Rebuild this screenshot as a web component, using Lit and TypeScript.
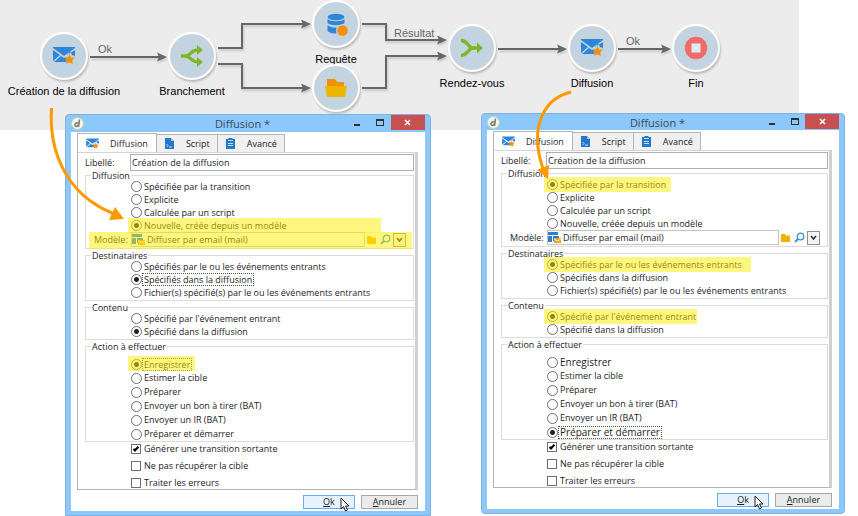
import { LitElement, html, svg, css, nothing } from "lit";
import { customElement, property } from "lit/decorators.js";
import { classMap } from "lit/directives/class-map.js";
import { styleMap } from "lit/directives/style-map.js";

interface Option {
  label: string;
  checked?: boolean;
  focus?: boolean;
  large?: boolean;
  /** Width of the marker highlight, in pixels. */
  mark?: number;
}

interface Group {
  legend: string;
  options: Option[];
  template?: boolean;
  roomy?: boolean;
}

interface DialogData {
  id: string;
  templateMarked: boolean;
  groups: Group[];
}

interface Node {
  x: number;
  y: number;
  label: string;
  icon: string;
}

const mailIcon = svg`
  <path fill="#2e86d8" d="M0 1h22v1L11 10 0 2zM0 4l7 5-7 6zM22 4v6l-3-1-2-4-2 4-1 0zM1 16l7-6 3 2 2-1 1 2-1 3z"/>
  <path fill="#f29100" d="M16.500 8l1.600 3.400 3.700.4-2.700 2.600.7 3.800-3.300-1.900-3.300 1.900.7-3.800-2.700-2.600 3.700-.4z"/>`;

const nodeIcons: Record<string, unknown> = {
  mail: mailIcon,
  fork: svg`
    <path fill="none" stroke="#7fb52b" stroke-width="3.400" d="M0 10h5c4 0 5-6 12-6M5 10c4 0 5 6 12 6"/>
    <path fill="#7fb52b" d="M16-1l6 5-6 5zM16 11l6 5-6 5z"/>`,
  join: svg`
    <path fill="none" stroke="#7fb52b" stroke-width="3.400" d="M0 2.500c7 0 7 7.500 12 7.500h5M0 17.500c7 0 7-7.500 12-7.500"/>
    <path fill="#7fb52b" d="M16 4.500l6 5.500-6 5.500z"/>`,
  database: svg`
    <ellipse cx="11" cy="3" rx="8.500" ry="3.300" fill="#2e86d8"/>
    <path fill="#2e86d8" d="M2.500 5c3 3 14 3 17 0v4c-3 3-14 3-17 0zM2.500 11c3 3 7 2.500 9 2.500v6c-4 0-7-.5-9-2.500z"/>
    <circle cx="17.500" cy="16.500" r="6.200" fill="#c3d4e0"/>
    <circle cx="17.500" cy="16.500" r="5.300" fill="#f29100"/>`,
  folder: svg`
    <path fill="#f29100" d="M2 1h8l2 3h7v4H2z"/>
    <path fill="#edb500" d="M0 8h22l-2 11H2z"/>`,
  stop: svg`
    <circle cx="11" cy="10" r="11.200" fill="#ee6b6b"/>
    <path fill="#e4ebf2" d="M6.500 5.500h9v9h-9z"/>`,
};

const nodes: Node[] = [
  { x: 64, y: 56, label: "Création de la diffusion", icon: "mail" },
  { x: 192, y: 56, label: "Branchement", icon: "fork" },
  { x: 336, y: 24, label: "Requête", icon: "database" },
  { x: 336, y: 88, label: "", icon: "folder" },
  { x: 472, y: 48, label: "Rendez-vous", icon: "join" },
  { x: 592, y: 48, label: "Diffusion", icon: "mail" },
  { x: 696, y: 48, label: "Fin", icon: "stop" },
];

const links = [
  { d: "M90 57H160", tip: [167, 57] },
  { d: "M218 48H242V24H304", tip: [311, 24] },
  { d: "M218 64H242V88H304", tip: [311, 88] },
  { d: "M362 24H386V40H440", tip: [447, 40] },
  { d: "M362 88H386V56H440", tip: [447, 56] },
  { d: "M498 49H560", tip: [567, 49] },
  { d: "M618 49H664", tip: [671, 49] },
];

const linkLabels = [
  { x: 98, y: 43, text: "Ok" },
  { x: 394, y: 27, text: "Résultat" },
  { x: 626, y: 35, text: "Ok" },
];

const dialogs: DialogData[] = [
  {
    id: "creation",
    templateMarked: true,
    groups: [
      {
        legend: "Diffusion",
        template: true,
        options: [
          { label: "Spécifiée par la transition" },
          { label: "Explicite" },
          { label: "Calculée par un script" },
          { label: "Nouvelle, créée depuis un modèle", checked: true, mark: 253 },
        ],
      },
      {
        legend: "Destinataires",
        options: [
          { label: "Spécifiés par le ou les événements entrants" },
          { label: "Spécifiés dans la diffusion", checked: true, focus: true },
          { label: "Fichier(s) spécifié(s) par le ou les événements entrants" },
        ],
      },
      {
        legend: "Contenu",
        options: [
          { label: "Spécifié par l'événement entrant" },
          { label: "Spécifié dans la diffusion", checked: true },
        ],
      },
      {
        legend: "Action à effectuer",
        roomy: true,
        options: [
          { label: "Enregistrer", checked: true, focus: true, mark: 67 },
          { label: "Estimer la cible" },
          { label: "Préparer" },
          { label: "Envoyer un bon à tirer (BAT)" },
          { label: "Envoyer un IR (BAT)" },
          { label: "Préparer et démarrer" },
        ],
      },
    ],
  },
  {
    id: "diffusion",
    templateMarked: false,
    groups: [
      {
        legend: "Diffusion",
        template: true,
        options: [
          { label: "Spécifiée par la transition", checked: true, mark: 127 },
          { label: "Explicite" },
          { label: "Calculée par un script" },
          { label: "Nouvelle, créée depuis un modèle" },
        ],
      },
      {
        legend: "Destinataires",
        options: [
          { label: "Spécifiés par le ou les événements entrants", checked: true, mark: 207 },
          { label: "Spécifiés dans la diffusion" },
          { label: "Fichier(s) spécifié(s) par le ou les événements entrants" },
        ],
      },
      {
        legend: "Contenu",
        options: [
          { label: "Spécifié par l'événement entrant", checked: true, mark: 153 },
          { label: "Spécifié dans la diffusion" },
        ],
      },
      {
        legend: "Action à effectuer",
        roomy: true,
        options: [
          { label: "Enregistrer", large: true },
          { label: "Estimer la cible" },
          { label: "Préparer" },
          { label: "Envoyer un bon à tirer (BAT)" },
          { label: "Envoyer un IR (BAT)" },
          { label: "Préparer et démarrer", checked: true, focus: true, large: true },
        ],
      },
    ],
  },
];

@customElement("workflow-diagram")
export class WorkflowDiagram extends LitElement {
  static styles = css`
    :host {
      display: block;
      position: relative;
      height: 130px;
      background: #ececec;
      font: 11px/13px "Liberation Sans", Arial, sans-serif;
      color: #000;
    }
    .links {
      position: absolute;
      left: 0;
      top: 0;
      width: 100%;
      height: 100%;
      filter: drop-shadow(1px 2px 1px #c4c4c4);
    }
    .node {
      position: absolute;
      display: flex;
      flex-direction: column;
      align-items: center;
      gap: 5px;
      width: 140px;
      margin: -24px 0 0 -70px;
    }
    .disc {
      display: flex;
      align-items: center;
      justify-content: center;
      box-sizing: border-box;
      width: 48px;
      height: 48px;
      border: 2px solid #fff;
      border-radius: 50%;
      background: #c3d4e0;
      box-shadow: 1px 2px 2px #bdbdbd;
    }
    .disc svg {
      width: 22px;
      height: 20px;
      overflow: visible;
    }
    .link-label {
      position: absolute;
      color: #666;
    }
  `;

  render() {
    return html`
      <svg class="links" aria-hidden="true">
        ${links.map(
          (l) => svg`
            <path d=${l.d} fill="none" stroke="#666" stroke-width="2"/>
            <path fill="#666" transform="translate(${l.tip[0]} ${l.tip[1]})" d="M0 0l-10-4.500 2 4.500-2 4.500z"/>`
        )}
      </svg>
      ${nodes.map(
        (n) => html`
          <div class="node" style=${styleMap({ left: `${n.x}px`, top: `${n.y}px` })}>
            <div class="disc"><svg viewBox="0 0 22 20" aria-hidden="true">${nodeIcons[n.icon]}</svg></div>
            <span>${n.label}</span>
          </div>`
      )}
      ${linkLabels.map(
        (l) => html`<span class="link-label" style=${styleMap({ left: `${l.x}px`, top: `${l.y}px` })}>${l.text}</span>`
      )}
    `;
  }
}

@customElement("delivery-dialog")
export class DeliveryDialog extends LitElement {
  @property({ attribute: false }) data!: DialogData;

  static styles = css`
    :host {
      display: block;
      box-sizing: border-box;
      padding: 0 5px 4px;
      border: 1px solid #7fb2de;
      border-radius: 4px 4px 0 0;
      background: #8cc8fc;
      color: #1c1c28;
      font: 9px/13px "Open Sans", "Noto Sans", sans-serif;
    }
    input,
    button {
      margin: 0;
      font: inherit;
      color: inherit;
      box-sizing: border-box;
    }
    .titlebar {
      display: grid;
      grid-template-columns: 1fr auto 1fr;
      align-items: center;
      height: var(--titlebar, 17px);
    }
    .title {
      margin: 0;
      padding-right: 11px;
      font: 11px/15px "Open Sans", "Noto Sans", sans-serif;
      color: #3b4a58;
    }
    .logo {
      width: 13px;
      height: 13px;
    }
    .controls {
      display: flex;
      justify-content: flex-end;
      align-self: start;
    }
    .control {
      width: 22px;
      height: 15px;
      padding: 0;
      border: 0;
      background: none;
      display: flex;
      align-items: center;
      justify-content: center;
    }
    .control.close {
      width: 34px;
      background: #c75050;
    }
    .control svg {
      width: 9px;
      height: 9px;
    }
    .client {
      padding: 1px 7px 2px 6px;
      background: #fff;
    }
    .tabs {
      display: flex;
      align-items: flex-end;
    }
    .tab {
      display: flex;
      align-items: center;
      gap: 11px;
      height: 18px;
      padding: 0 7px;
      border: 1px solid #b4b4b4;
      border-left: 0;
      border-bottom: 0;
      background: #f0f0f0;
    }
    .tab.active {
      height: 19px;
      padding: 0 8px;
      border-left: 1px solid #b4b4b4;
      background: #fff;
    }
    .tab svg {
      width: 11px;
      height: 11px;
    }
    .tab.active svg {
      width: 13px;
    }
    .panel {
      padding: 1px 1px 1px 7px;
      border: 1px solid #b4b4b4;
      border-top: 1px solid #d4d4d4;
      border-right: 3px solid #d0d0d0;
    }
    .field {
      display: grid;
      grid-template-columns: 45px 1fr;
      align-items: center;
    }
    .field input {
      width: 100%;
      height: 17px;
      padding: 0 0 1px 1px;
      border: 1px solid #b0b0b0;
      border-radius: 0;
      background: #fff;
    }
    fieldset {
      margin: 0 0 2px;
      min-width: 0;
      padding: 0 0 1px;
      border: 1px solid #dcdcdc;
    }
    fieldset.roomy {
      padding: 6px 0 0;
    }
    legend {
      margin-left: 5px;
      padding: 0 1px;
      line-height: 9px;
    }
    .options {
      display: grid;
      grid-auto-rows: 13px;
      padding-left: 45px;
    }
    .roomy .options {
      grid-auto-rows: 14px;
    }
    .option,
    .check {
      position: relative;
      display: flex;
      align-items: center;
      justify-self: start;
      gap: 1px;
      white-space: nowrap;
    }
    .option.marked::after,
    .template.marked::after {
      content: "";
      position: absolute;
      left: -3px;
      top: -1px;
      width: var(--mark);
      height: 15px;
      background: #ffee00;
      opacity: 0.5;
      pointer-events: none;
    }
    .template.marked::after {
      left: 3px;
      right: 1px;
      top: 0;
      width: auto;
      height: 17px;
    }
    input[type="radio"],
    input[type="checkbox"] {
      appearance: none;
      flex: none;
      width: 11px;
      height: 11px;
      border: 1px solid #707070;
      background: #fff;
    }
    input[type="radio"] {
      border-radius: 50%;
    }
    input[type="radio"]:checked {
      background: radial-gradient(circle, #222 2px, #fff 3px);
    }
    .text {
      padding: 0 1px;
      line-height: 12px;
    }
    .text.focus {
      margin: 0 -1px;
      border: 1px dotted #555;
      line-height: 11px;
    }
    .large .text {
      font-size: 10px;
    }
    .template {
      position: relative;
      display: grid;
      grid-template-columns: 37px 1fr auto;
      align-items: center;
      height: 15px;
      padding: 0 7px 0 8px;
    }
    .combo {
      display: flex;
      align-items: center;
      gap: 2px;
      height: 13px;
      border: 1px solid #c4c4c4;
    }
    .combo svg {
      flex: none;
      width: 13px;
      height: 11px;
    }
    .combo input {
      flex: 1;
      min-width: 0;
      height: 13px;
      padding: 0;
      border: 0;
      background: none;
    }
    .tools {
      display: flex;
      align-items: center;
      gap: 1px;
    }
    .tool {
      width: 13px;
      height: 14px;
      padding: 0;
      border: 0;
      background: none;
      display: flex;
      align-items: center;
      justify-content: center;
    }
    .tool.drop {
      border: 1px solid #909090;
      background: #f4f4f4;
    }
    .tool svg {
      flex: none;
      width: 11px;
      height: 11px;
    }
    .checks {
      display: grid;
      gap: 7px;
      padding-left: 46px;
    }
    .check {
      height: 10px;
    }
    .check input {
      display: grid;
      place-items: center;
      width: 10px;
      height: 10px;
      gap: 0;
    }
    .check .text {
      padding-left: 2px;
    }
    .check input:checked::before {
      content: "";
      width: 6px;
      height: 3px;
      margin-top: -2px;
      box-sizing: border-box;
      border: solid #000;
      border-width: 0 0 2px 2px;
      transform: rotate(-45deg);
    }
    .actions {
      display: flex;
      justify-content: flex-end;
      gap: 6px;
      margin-top: 5px;
    }
    .action {
      position: relative;
      width: 57px;
      height: 14px;
      padding: 0;
      border: 1px solid #a8a8a8;
      background: #ebebeb;
      line-height: 12px;
    }
    .action.default {
      width: 52px;
      border-color: #6aaaf0;
      background: #e6f2fd;
    }
    .pointer {
      position: absolute;
      left: 36px;
      top: 1px;
      width: 10px;
      height: 15px;
    }
  `;

  private renderOption(o: Option, group: string) {
    return html`
      <label
        class=${classMap({ option: true, marked: !!o.mark, large: !!o.large })}
        style=${o.mark ? styleMap({ "--mark": `${o.mark}px` }) : nothing}
      >
        <input type="radio" name=${group} ?checked=${o.checked} />
        <span class=${classMap({ text: true, focus: !!o.focus })}>${o.label}</span>
      </label>`;
  }

  private renderTemplate() {
    return html`
      <div class=${classMap({ template: true, marked: this.data.templateMarked })}>
        <label for="template">Modèle:</label>
        <div class="combo">
          <svg viewBox="0 0 13 11" aria-hidden="true">
            <path fill="#2e7fc8" d="M0 0h10v3H0zM0 4h4v6H0zM5 4h6v2H6v3H5z" />
            <path fill="#f0a020" d="M6 6h7v5H6z" />
            <path fill="none" stroke="#fff3d0" d="M6 7l3.500 2L13 7" />
          </svg>
          <input id="template" type="text" value="Diffuser par email (mail)" />
        </div>
        <div class="tools">
          <button class="tool" type="button" aria-label="Parcourir">
            <svg viewBox="0 0 11 11"><path fill="#f2b200" d="M1 2h4l1 1.500h4V10H1z" /></svg>
          </button>
          <button class="tool" type="button" aria-label="Rechercher">
            <svg viewBox="0 0 11 11">
              <circle cx="6.500" cy="4.500" r="3.300" fill="none" stroke="#3b8fd0" stroke-width="1.300" />
              <path stroke="#3b8fd0" stroke-width="1.800" d="M4 7L1 10" />
            </svg>
          </button>
          <button class="tool drop" type="button" aria-label="Ouvrir la liste">
            <svg viewBox="0 0 11 11"><path fill="none" stroke="#333" stroke-width="1.600" d="M3 4l2.500 3L8 4" /></svg>
          </button>
        </div>
      </div>`;
  }

  render() {
    return html`
      <header class="titlebar">
        <svg class="logo" viewBox="0 0 13 13" aria-hidden="true">
          <circle cx="6.500" cy="6.500" r="6" fill="#f4f6ee" stroke="#b9d6a8" />
          <path fill="none" stroke="#7c8078" stroke-width="1.600" d="M8.500 2.500L7.500 10M7.500 6C5 5 3.500 7 4 8.500c.5 1.500 3 1 3.500-1" />
        </svg>
        <h2 class="title">Diffusion *</h2>
        <div class="controls">
          <button class="control" type="button" aria-label="Réduire">
            <svg viewBox="0 0 9 9"><path fill="#2a3138" d="M1 6h6v2H1z" /></svg>
          </button>
          <button class="control" type="button" aria-label="Agrandir">
            <svg viewBox="0 0 9 9"><path fill="#2a3138" fill-rule="evenodd" d="M1 1h8v7H1zM2 3v4h6V3z" /></svg>
          </button>
          <button class="control close" type="button" aria-label="Fermer">
            <svg viewBox="0 0 9 9"><path stroke="#fff" stroke-width="1.600" d="M2 2l5 5M7 2L2 7" /></svg>
          </button>
        </div>
      </header>
      <div class="client">
        <div class="tabs" role="tablist">
          <button class="tab active" type="button" role="tab" aria-selected="true">
            <svg viewBox="0 0 22 19" aria-hidden="true">${mailIcon}</svg>Diffusion
          </button>
          <button class="tab" type="button" role="tab">
            <svg viewBox="0 0 11 11" aria-hidden="true">
              <path fill="#2578c8" d="M1 0h6l3 3v8H1z" />
              <path fill="#9cc8ee" d="M7 0l3 3H7z" />
              <path fill="none" stroke="#bfe0fa" d="M2.500 6l1.500 1.500L2.500 9M5 9h3" />
            </svg>Script
          </button>
          <button class="tab" type="button" role="tab">
            <svg viewBox="0 0 11 11" aria-hidden="true">
              <path fill="#2578c8" d="M1 1h2.500V0h4v1H10v10H1z" />
              <path stroke="#bfe0fa" d="M3 2.500h5M3 5.500h5M3 7.500h5" />
            </svg>Avancé
          </button>
        </div>
        <div class="panel">
          <div class="field">
            <label for="name">Libellé:</label>
            <input id="name" type="text" value="Création de la diffusion" />
          </div>
          ${this.data.groups.map(
            (g, i) => html`
              <fieldset class=${classMap({ roomy: !!g.roomy })}>
                <legend>${g.legend}</legend>
                <div class="options">
                  ${g.options.map((o) => this.renderOption(o, `${this.data.id}-${i}`))}
                </div>
                ${g.template ? this.renderTemplate() : nothing}
              </fieldset>`
          )}
          <div class="checks">
            <label class="check"><input type="checkbox" checked /><span class="text">Générer une transition sortante</span></label>
            <label class="check"><input type="checkbox" /><span class="text">Ne pas récupérer la cible</span></label>
            <label class="check"><input type="checkbox" /><span class="text">Traiter les erreurs</span></label>
          </div>
        </div>
        <div class="actions">
          <button class="action default" type="button">
            <u>O</u>k
            <svg class="pointer" viewBox="0 0 10 15" aria-hidden="true">
              <path fill="#fff" stroke="#222" d="M1 1v11l2.500-2.500L5.500 14l2-1-2-4H9z" />
            </svg>
          </button>
          <button class="action" type="button"><u>A</u>nnuler</button>
        </div>
      </div>
    `;
  }
}

@customElement("app-root")
export class AppRoot extends LitElement {
  static styles = css`
    :host {
      display: block;
      position: relative;
      background: #fff;
      overflow: hidden;
    }
    workflow-diagram {
      margin-right: 59px;
    }
    .windows {
      position: relative;
      display: flex;
      align-items: flex-start;
      gap: 50px;
      margin-top: -17px;
      padding: 0 13px 0 65px;
    }
    delivery-dialog {
      flex: 366 1 0;
      margin-top: 1px;
    }
    delivery-dialog + delivery-dialog {
      --titlebar: 16px;
      flex: 364 1 0;
      margin-top: 0;
      border-radius: 4px;
    }
    .callouts {
      position: absolute;
      left: 0;
      top: 0;
      width: 100%;
      height: 100%;
      pointer-events: none;
    }
  `;

  render() {
    return html`
      <workflow-diagram></workflow-diagram>
      <main class="windows">
        ${dialogs.map((d) => html`<delivery-dialog .data=${d}></delivery-dialog>`)}
      </main>
      <svg class="callouts" aria-hidden="true">
        <g fill="none" stroke="#ff9900" stroke-width="3">
          <path d="M51.500 108C49 146 62 193 114 214" />
          <path d="M571 92C546 98 528 124 543 169" />
        </g>
        <path fill="#ff9900" d="M115 207l9 12-15 1z" />
        <path fill="#ff9900" d="M537 170l12-5-1 14z" />
      </svg>
    `;
  }
}
